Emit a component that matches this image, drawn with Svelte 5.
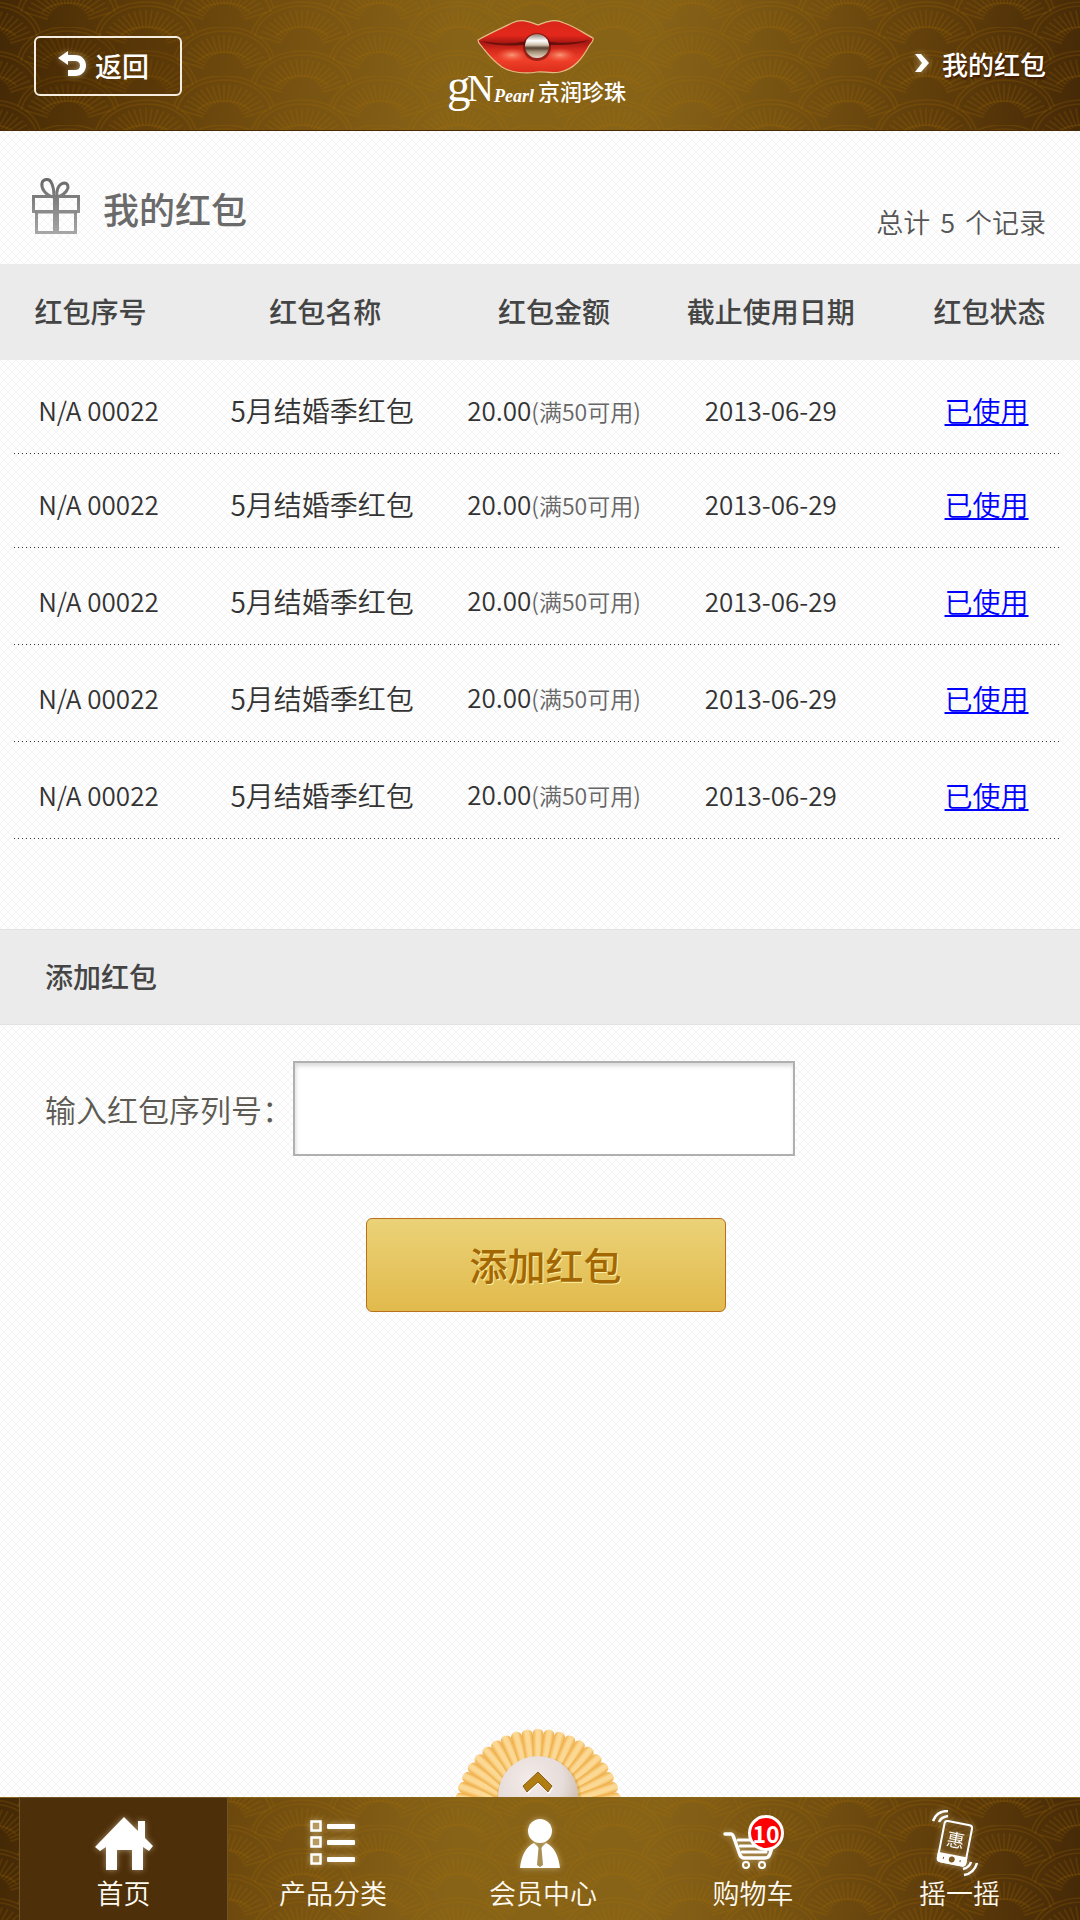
<script>
  const rows = Array.from({ length: 5 }, (_, i) => ({
    id: i,
    serial: 'N/A 00022',
    name: '5月结婚季红包',
    amount: '20.00',
    note: '(满50可用)',
    expires: '2013-06-29',
    status: '已使用'
  }));
  const columns = ['红包序号', '红包名称', '红包金额', '截止使用日期', '红包状态'];

  let code = $state('');

  // Rays of one decorative fan, drawn around its own origin.
  const rays = Array.from({ length: 19 }, (_, i) => {
    const a = ((i - 9) * 7.6 * Math.PI) / 180;
    return {
      x1: 22 * Math.sin(a), y1: 50 - 24 * Math.cos(a),
      x2: 46 * Math.sin(a), y2: 50 - 42 * Math.cos(a)
    };
  });

  // Ribs of the shell behind the scroll-to-top pearl.
  const ribs = Array.from({ length: 25 }, (_, i) => ((i - 12) * 7.9));
</script>

{#snippet fans(id)}
  <svg class="fans" aria-hidden="true">
    <defs>
      <g id="{id}-fan">
        <path d="M-50 30C-44 10-22 0 0 0S44 10 50 30" />
        <path d="M-47 34C-42 13-20 4 0 4S42 13 47 34" />
        <path d="M-26 34C-14 22 14 22 26 34" />
        {#each rays as r}
          <line x1={r.x1} y1={r.y1} x2={r.x2} y2={r.y2} />
        {/each}
      </g>
      <pattern {id} width="156" height="49" patternUnits="userSpaceOnUse" y="-22">
        <g fill="none" stroke="#a87000" stroke-opacity=".2" stroke-width="1.7">
          <use href="#{id}-fan" x="68" y="0" />
          <use href="#{id}-fan" x="-10" y="24" />
          <use href="#{id}-fan" x="146" y="24" />
          <use href="#{id}-fan" x="-10" y="-25" />
          <use href="#{id}-fan" x="146" y="-25" />
        </g>
      </pattern>
    </defs>
    <rect width="100%" height="100%" fill="url(#{id})" />
  </svg>
{/snippet}

<div class="page">
  <header>
    {@render fans('top-fans')}
    <button class="back" type="button">
      <svg width="32" height="30" viewBox="0 0 32 30" aria-hidden="true">
        <path d="M1 8 11 1V5H18C25 5 29 10 29 15.500S25 26 18 26H11V20H18C21 20 23 18.500 23 15.500S21 11 18 11H11V15Z" fill="#fff" />
      </svg>
      返回
    </button>
    <svg class="logo" width="180" height="104" viewBox="4 0 180 104" role="img" aria-label="gN Pearl 京润珍珠">
      <defs>
        <linearGradient id="lip" x1="0" y1="0" x2="0" y2="1">
          <stop offset="0" stop-color="#d9261a" />
          <stop offset=".28" stop-color="#e3281b" />
          <stop offset=".42" stop-color="#a81812" />
          <stop offset=".56" stop-color="#d62a1c" />
          <stop offset=".75" stop-color="#f0402a" />
          <stop offset="1" stop-color="#d92c1a" />
        </linearGradient>
        <radialGradient id="lip-light">
          <stop offset="0" stop-color="#ffb28c" stop-opacity=".8" />
          <stop offset="1" stop-color="#ff6a4a" stop-opacity="0" />
        </radialGradient>
        <linearGradient id="pearl" x1="0" y1="0" x2="0" y2="1">
          <stop offset="0" stop-color="#8d7b6e" />
          <stop offset=".28" stop-color="#fff" />
          <stop offset=".46" stop-color="#cfc0ac" />
          <stop offset=".58" stop-color="#54402f" />
          <stop offset=".75" stop-color="#a8937a" />
          <stop offset="1" stop-color="#e8dccb" />
        </linearGradient>
      </defs>
      <path d="M32 27C44 20 56 15 66 10C76 5 84 9 92 12C100 9 108 5 118 10C130 14 137 20 147 25C148 28 145 30 143 33C136 46 128 56 114 59C104 61 98 58 91 59C80 61 66 60 56 54C46 47 41 40 37 35C34 31 32 30 32 27Z" fill="url(#lip)" stroke="#e3bd85" stroke-width="1.200" />
      <path d="M35 28C52 31 64 31 76 29C86 28 98 28 106 29C120 31 132 29 144 27C130 32 118 32 106 32H76C62 33 48 33 35 28Z" fill="#4a0a08" opacity=".7" />
      <ellipse cx="66" cy="42" rx="16" ry="7" fill="url(#lip-light)" />
      <ellipse cx="114" cy="42" rx="16" ry="7" fill="url(#lip-light)" />
      <circle cx="91" cy="34" r="14" fill="#4a0a08" opacity=".5" />
      <circle cx="91" cy="33" r="12" fill="url(#pearl)" />
      <g fill="#fff">
        <text class="mark-g" x="1" y="88">g</text>
        <text class="mark-n" x="21" y="88">N</text>
        <text class="pearl" x="48" y="89">Pearl</text>
        <text class="brand" x="92" y="87">京润珍珠</text>
      </g>
    </svg>
    <a class="crumb" href="#packets">
      <svg width="16" height="20" viewBox="0 0 16 20" aria-hidden="true">
        <path d="M1 1H7L15 10 7 19H1L8 10Z" fill="#fff" />
      </svg>
      我的红包
    </a>
  </header>

  <main>
    <div class="title" id="packets">
      <svg width="50" height="58" viewBox="0 0 50 58" fill="none" aria-hidden="true">
        <defs>
          <linearGradient id="gift" gradientUnits="userSpaceOnUse" x1="0" y1="0" x2="0" y2="58">
            <stop offset="0" stop-color="#666" />
            <stop offset=".4" stop-color="#808080" />
            <stop offset="1" stop-color="#a8a8a8" />
          </linearGradient>
        </defs>
        <g stroke="url(#gift)" stroke-width="3">
          <path d="M22 20C14 18 10 11 11 6C12 2 18 1 20 5C23 10 23 15 23 20" />
          <path d="M26 20C25 14 27 7 33 6C37 6 38 10 36 13C34 17 30 19 26 20" />
          <rect x="2.500" y="19.500" width="45" height="15" />
          <path d="M5.500 34V55.500H44.500V34" />
        </g>
        <path d="M4 35H46" stroke="#8a8a8a" stroke-width="3" />
        <path d="M22 19H28V56H22Z" fill="url(#gift)" />
      </svg>
      <h1>我的红包</h1>
      <p><span>总计</span><span>5</span><span>个记录</span></p>
    </div>

    <table>
      <thead>
        <tr>
          {#each columns as c}<th scope="col">{c}</th>{/each}
        </tr>
      </thead>
      <tbody>
        {#each rows as r (r.id)}
          <tr>
            <td class="latin">{r.serial}</td>
            <td>{r.name}</td>
            <td class="latin">{r.amount}<small>{r.note}</small></td>
            <td class="latin">{r.expires}</td>
            <td><a href="#used">{r.status}</a></td>
          </tr>
        {/each}
      </tbody>
    </table>

    <h2>添加红包</h2>
    <form onsubmit={(e) => e.preventDefault()}>
      <div class="field">
        <label for="code">输入红包序列号：</label>
        <input id="code" type="text" bind:value={code} />
      </div>
      <button class="submit" type="submit">添加红包</button>
    </form>
  </main>

  <a class="to-top" href="#packets" aria-label="回到顶部">
    <svg width="174" height="70" viewBox="0 0 170 70" aria-hidden="true">
      <defs>
        <linearGradient id="rib" x1="0" y1="0" x2="1" y2="0">
          <stop offset="0" stop-color="#efad45" />
          <stop offset=".35" stop-color="#fbd893" />
          <stop offset=".65" stop-color="#fbd893" />
          <stop offset="1" stop-color="#eeaa40" />
        </linearGradient>
        <radialGradient id="pearl-button" cx=".4" cy=".3" r=".7">
          <stop offset="0" stop-color="#f4ecea" />
          <stop offset=".6" stop-color="#e6dcd9" />
          <stop offset="1" stop-color="#c9b7a6" />
        </radialGradient>
      </defs>
      {#each ribs as a}
        <rect x="79.500" y="1" width="11" height="82" rx="5" fill="url(#rib)" transform="rotate({a} 85 85)" />
      {/each}
      <circle cx="86" cy="70" r="42" fill="#b87a20" opacity=".25" />
      <circle cx="85" cy="68" r="40" fill="url(#pearl-button)" />
      <path d="M71 60 85 46 100 60 96 66 85 55 75 66Z" fill="#fff" />
      <path d="M70 58 85 44 99 58 95 64 85 54 74 64Z" fill="#b07d10" stroke="#7a4a08" stroke-width=".8" />
    </svg>
  </a>

  <nav>
    {@render fans('nav-fans')}
    <a class="active" href="#home">
      <svg width="60" height="58" viewBox="0 0 60 58" aria-hidden="true">
        <path d="M1 31 30 1 44 15V5H51V22L59 30 55 35 49 31V54H38V34H23V54H12V31L6 35Z" fill="#fff" />
      </svg>
      首页
    </a>
    <a href="#category">
      <svg width="60" height="58" viewBox="1 0 60 58" aria-hidden="true">
        {#each [6, 22, 39] as y}
          <rect x="10" {y} width="9" height="9" fill="#b79a62" />
          <rect x="9.500" y={y - 0.5} width="9" height="9" fill="none" stroke="#fff" stroke-width="2.500" />
          <rect x="25" y={y + 2} width="28" height="5" rx="1" fill="#fff" />
        {/each}
      </svg>
      产品分类
    </a>
    <a href="#member">
      <svg width="60" height="58" viewBox="3 1 60 58" aria-hidden="true">
        <circle cx="30" cy="16" r="12" fill="#fff" />
        <path d="M10 53C11 42 16 31 24 28L30 34 36 28C44 31 49 42 50 53Z" fill="#fff" />
        <path d="M27 28H33L31.500 33 33 50 30 52 27 50 28.500 33Z" fill="#a88f55" />
      </svg>
      会员中心
    </a>
    <a href="#cart">
      <svg width="60" height="58" viewBox="1 0 60 58" fill="none" stroke="#fff" stroke-linecap="round" stroke-linejoin="round" aria-hidden="true">
        <path d="M3 18H9C11 18 11 20 12 22L18 39C19 41 20 42 22 42H43C46 42 47 41 48 38L51 28" stroke-width="3.500" />
        <path d="M16 24H46M18 30H46M20 36H44" stroke-width="3" />
        <circle cx="24" cy="49" r="3" stroke-width="2" />
        <circle cx="40" cy="49" r="3" stroke-width="2" />
      </svg>
      <span class="badge">10</span>
      购物车
    </a>
    <a href="#shake">
      <svg class="shake" width="60" height="70" viewBox="6 2 60 70" fill="none" stroke="#fff" stroke-width="2" aria-hidden="true">
        <g transform="rotate(11 32 35)">
          <rect x="17" y="15" width="28" height="41" rx="3" />
          <path d="M17 48H45V53Q45 56 42 56H20Q17 56 17 53Z" fill="#fff" />
          <circle cx="31" cy="52" r="2" fill="#7a5a20" stroke="#7a5a20" />
          <path d="M22 52H23M39 52H40" stroke="#7a5a20" />
          <text x="31" y="39" text-anchor="middle" fill="#fff" stroke="none">惠</text>
        </g>
        <g stroke-width="2.500">
          <path d="M9 13C11 7 16 3 24 3M15 14C17 10 19 9 24 8" />
          <path d="M40 67C47 66 51 62 53 55M39 61C43 60 46 58 47 54" />
        </g>
      </svg>
      摇一摇
    </a>
  </nav>
</div>

<style>
  :global(body) {
    margin: 0;
  }
  .page {
    box-sizing: border-box;
    min-height: 100vh;
    display: flex;
    flex-direction: column;
    font-family: 'Noto Sans CJK SC', sans-serif;
    color: #333;
    background:
      linear-gradient(45deg, transparent 46%, rgba(0, 0, 0, .045) 50%, transparent 54%) 0 0 / 8px 8px,
      linear-gradient(-45deg, transparent 46%, rgba(0, 0, 0, .045) 50%, transparent 54%) 0 0 / 8px 8px,
      #fefefe;
  }
  a {
    text-decoration: none;
    color: inherit;
  }
  button {
    font-family: inherit;
    cursor: pointer;
  }
  header,
  nav {
    position: relative;
    background: linear-gradient(97deg, #432806 0%, #5d3b09 12%, #775211 28%, #876318 42%, #876318 60%, #745011 74%, #5d3b0a 88%, #452907 100%);
  }
  .fans {
    position: absolute;
    inset: 0;
    width: 100%;
    height: 100%;
  }
  header {
    box-sizing: border-box;
    height: 131px;
    padding: 0 34px;
    display: grid;
    grid-template-columns: 1fr auto 1fr;
    align-items: center;
    border-bottom: 1px solid #4b2b05;
    color: #fff;
  }
  header > :not(.fans) {
    position: relative;
  }
  .back {
    justify-self: start;
    display: flex;
    align-items: center;
    justify-content: center;
    gap: 6px;
    width: 148px;
    height: 60px;
    margin-top: 2px;
    padding: 0 10px 2px 0;
    border: 2px solid #f5eee0;
    border-radius: 6px;
    background: rgba(60, 30, 0, .2);
    color: #fff;
    font-size: 27px;
    font-weight: 500;
  }
  .back svg,
  .crumb svg,
  nav a > svg {
    filter: drop-shadow(0 0 3px rgba(255, 240, 200, .5));
  }
  .logo {
    display: block;
    overflow: visible;
  }
  .mark-g {
    font: 47px 'Liberation Serif', serif;
  }
  .mark-n {
    font: 37px 'Liberation Serif', serif;
  }
  .pearl {
    font: italic bold 18px 'Liberation Serif', serif;
  }
  .brand {
    font-size: 22px;
    font-weight: 500;
  }
  .crumb {
    justify-self: end;
    display: flex;
    align-items: center;
    gap: 12px;
    padding-bottom: 4px;
    font-size: 26px;
    font-weight: 500;
    text-shadow: 1px 2px 2px rgba(50, 10, 0, .7);
  }
  main {
    flex: 1;
  }
  .title {
    box-sizing: border-box;
    height: 133px;
    padding: 16px 34px 0 31px;
    display: flex;
    align-items: center;
    gap: 22px;
  }
  h1 {
    margin: 4px 0 0;
    flex: 1;
    font-size: 36px;
    font-weight: 500;
    color: #6a6a6a;
  }
  .title p {
    margin: 32px 0 0;
    display: flex;
    gap: 10px;
    font-size: 27px;
    font-weight: 350;
    color: #555;
  }
  table {
    width: 100%;
    table-layout: fixed;
    border-collapse: collapse;
    white-space: nowrap;
  }
  th,
  td {
    padding: 0 4px 0 0;
    text-align: center;
    font-size: 28px;
    line-height: 40px;
  }
  th {
    height: 94px;
    padding-bottom: 2px;
    font-weight: 500;
    color: #444;
    background: #ebebeb;
  }
  th:nth-child(1),
  th:nth-child(3),
  th:nth-child(5) {
    width: 17%;
  }
  th:nth-child(2) {
    width: 26%;
  }
  th:nth-child(4) {
    width: 23%;
  }
  th:nth-child(2),
  th:nth-child(5) {
    padding-right: 0;
    padding-left: 2px;
  }
  td {
    height: 89px;
    padding-top: 8px;
    font-weight: 350;
  }
  td:first-child {
    padding-right: 0;
    padding-left: 12px;
  }
  tr:nth-child(-n+2) td {
    height: 88px;
    padding-top: 6px;
  }
  tbody tr {
    background:
      repeating-linear-gradient(90deg, #333 0 1px, transparent 1px 4px) 14px 100% / calc(100% - 34px) 1px no-repeat;
  }
  td.latin {
    font-size: 26px;
  }
  small {
    font-size: 23px;
    color: #666;
  }
  td a {
    color: #00f;
    text-decoration: underline;
  }
  h2 {
    box-sizing: border-box;
    height: 96px;
    margin: 90px 0 0;
    padding: 0 45px;
    font-size: 28px;
    line-height: 92px;
    font-weight: 500;
    color: #444;
    background: #ebebeb;
    border-top: 1px solid #e2e2e2;
    border-bottom: 1px solid #e2e2e2;
  }
  form {
    padding: 36px 34px 36px 45px;
  }
  .field {
    display: flex;
    align-items: center;
  }
  label {
    font-size: 31px;
    font-weight: 350;
    color: #5c5a52;
    white-space: nowrap;
  }
  input {
    box-sizing: border-box;
    flex: 0 1 502px;
    min-width: 0;
    height: 95px;
    padding: 0 16px;
    border: 2px solid #b0b0b0;
    border-radius: 0;
    background: #fff;
    box-shadow: inset 1px 3px 4px rgba(0, 0, 0, .15);
    font-size: 28px;
  }
  .submit {
    display: block;
    width: 360px;
    height: 94px;
    margin: 62px auto 0;
    padding: 0 0 4px;
    border: 1px solid #b8701c;
    border-radius: 6px;
    background: linear-gradient(#ebd278, #e1ba4c);
    color: #a36804;
    font-size: 38px;
    font-weight: 500;
    text-shadow: 1px 1px 0 #fff0a0;
  }
  .to-top {
    align-self: center;
    display: block;
    height: 69px;
    margin-right: 4px;
    overflow: hidden;
  }
  nav {
    box-sizing: border-box;
    height: 123px;
    padding: 0 20px;
    display: grid;
    grid-template-columns: 207fr 212fr 208fr 212fr 201fr;
    border-top: 1px solid #8a6618;
    color: #fffaf0;
  }
  nav a {
    position: relative;
    display: flex;
    flex-direction: column;
    align-items: center;
    padding-top: 18px;
    font-size: 27px;
    line-height: 38px;
    font-weight: 350;
  }
  nav .active {
    background: #4d2f0a;
    box-shadow: 0 0 0 1px #6f5428;
  }
  nav .shake {
    margin: -6px 0;
  }
  .shake text {
    font-size: 18px;
  }
  .badge {
    position: absolute;
    top: 17px;
    left: calc(50% - 5px);
    box-sizing: border-box;
    width: 36px;
    height: 36px;
    border: 3px solid #fff;
    border-radius: 50%;
    background: #f00;
    color: #fff;
    font-size: 23px;
    line-height: 30px;
    font-weight: 700;
    text-align: center;
  }
</style>
